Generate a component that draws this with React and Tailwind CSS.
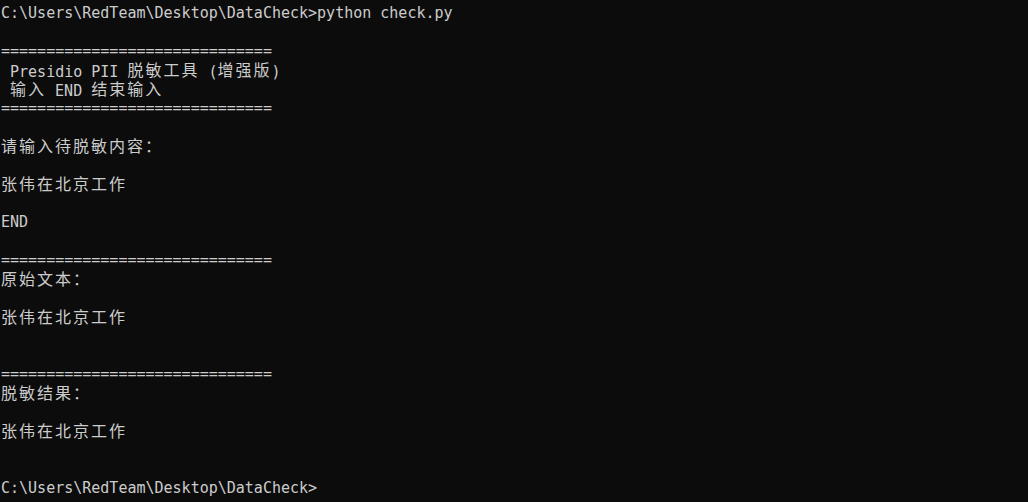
import React from "react";

const EQ = "==============================";
const lines = [
  "C:\\Users\\RedTeam\\Desktop\\DataCheck>python check.py",
  "",
  EQ,
  " Presidio PII 脱敏工具 (增强版)",
  " 输入 END 结束输入",
  EQ,
  "",
  "请输入待脱敏内容：",
  "",
  "张伟在北京工作",
  "",
  "END",
  "",
  EQ,
  "原始文本：",
  "",
  "张伟在北京工作",
  "",
  "",
  EQ,
  "脱敏结果：",
  "",
  "张伟在北京工作",
  "",
  "",
  "C:\\Users\\RedTeam\\Desktop\\DataCheck>",
];

function Line({ text }) {
  const parts = text.split(/([\u3000-\u9fff\uff00-\uffef]+)/);
  return (
    <div className="h-[19px] whitespace-pre leading-[19px]">
      {parts.map((p, i) =>
        /[\u3000-\u9fff\uff00-\uffef]/.test(p) ? (
          <span
            key={i}
            className="align-[1px] font-['Noto_Sans_CJK_SC',sans-serif] text-[16px] leading-[16px] tracking-[2px]"
          >
            {p}
          </span>
        ) : (
          <span key={i}>{p}</span>
        )
      )}
    </div>
  );
}

export default function App() {
  return (
    <div className="flex h-[502px] w-[1028px] flex-col overflow-hidden bg-[#0c0c0c] pl-[1px] pt-[4px] font-['DejaVu_Sans_Mono','Liberation_Mono',monospace] text-[15px] text-[#cccccc]">
      {lines.map((t, i) => (
        <Line key={i} text={t} />
      ))}
    </div>
  );
}
